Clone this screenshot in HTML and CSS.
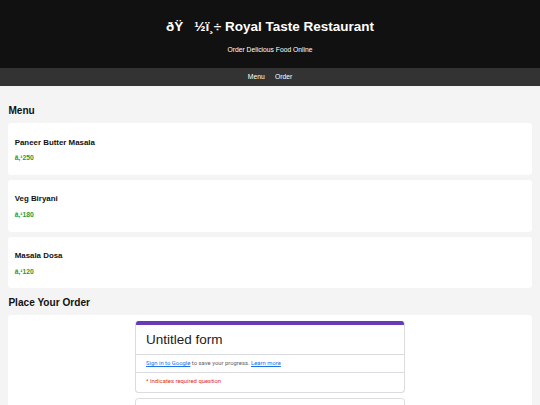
FILE: index.html
```html
<!DOCTYPE html>
<html lang="en">
<head>
<meta charset="utf-8">
<title>Royal Taste Restaurant</title>
<link rel="stylesheet" href="styles.css">
</head>
<body>
<header class="site-header">
  <h1 class="site-title">ðŸ&#x8D;½ï¸÷ Royal Taste Restaurant</h1>
  <p class="site-tagline">Order Delicious Food Online</p>
</header>
<nav class="site-nav">
  <a class="nav-link" href="#menu">Menu</a>
  <a class="nav-link" href="#order">Order</a>
</nav>
<main class="container">
  <h2 class="section-title" id="menu">Menu</h2>
  <div class="item">
    <h3 class="item-name">Paneer Butter Masala</h3>
    <p class="item-price">â‚¹250</p>
  </div>
  <div class="item">
    <h3 class="item-name">Veg Biryani</h3>
    <p class="item-price">â‚¹180</p>
  </div>
  <div class="item">
    <h3 class="item-name">Masala Dosa</h3>
    <p class="item-price">â‚¹120</p>
  </div>
  <h2 class="section-title" id="order">Place Your Order</h2>
  <div class="order-box">
    <div class="gform">
      <div class="gform-card gform-head">
        <div class="gform-bar"></div>
        <div class="gform-title">Untitled form</div>
        <div class="gform-row gform-signin"><a class="gform-link" href="#">Sign in to Google</a> to save your progress. <a class="gform-link" href="#">Learn more</a></div>
        <div class="gform-row gform-required">* Indicates required question</div>
      </div>
      <div class="gform-card gform-question"></div>
    </div>
  </div>
</main>
</body>
</html>
```
FILE: styles.css
```css
html, body {
  margin: 0;
  padding: 0;
}
body {
  background: #f4f4f4;
  font-family: "Liberation Sans", Arial, sans-serif;
  color: #111;
}
.site-header {
  background: #111;
  color: #fff;
  text-align: center;
  padding: 17px 0 14.6px;
}
.site-title {
  margin: 0 0 10.1px;
  font-size: 13.5px;
  line-height: 19px;
  font-weight: bold;
}
.site-tagline {
  margin: 0;
  font-size: 6.75px;
  line-height: 7.8px;
}
.site-nav {
  background: #333;
  text-align: center;
  padding: 5px 0 4.4px;
  font-size: 6.75px;
  line-height: 7.8px;
}
.nav-link {
  color: #fff;
  text-decoration: none;
  margin: 0 4.2px;
}
.container {
  padding: 10.5px 8.4px 20px;
}
.section-title {
  margin: 8.5px 0 7.2px;
  font-size: 10.1px;
  line-height: 11.6px;
  font-weight: bold;
  color: #111;
}
.item {
  background: #fff;
  border-radius: 3.4px;
  padding: 14.3px 6.3px 12.9px;
  margin-bottom: 5px;
}
.item-name {
  margin: 0 0 7.5px;
  font-size: 7.9px;
  line-height: 9.1px;
  font-weight: bold;
  color: #111;
}
.item-price {
  margin: 0;
  font-size: 6.75px;
  line-height: 7.8px;
  font-weight: bold;
  color: #1f9a33;
}
.order-box {
  background: #fff;
  border-radius: 3.4px;
  padding: 5.6px 0 0;
  height: 90px;
  overflow: hidden;
}
.gform {
  width: 270px;
  margin: 0 auto;
  font-family: Roboto, "Liberation Sans", Arial, sans-serif;
}
.gform-card {
  background: #fff;
  border: 1px solid #dadce0;
  border-radius: 3.4px;
  overflow: hidden;
}
.gform-head {
  border-top: 0;
}
.gform-bar {
  height: 4.2px;
  background: #673ab7;
}
.gform-title {
  padding: 5.8px 10px 5.7px;
  font-family: "Liberation Sans", Arial, sans-serif;
  font-size: 13.5px;
  line-height: 17px;
  color: #202124;
  border-bottom: 1px solid #dadce0;
}
.gform-row {
  padding: 5px 10px 5.5px;
  font-size: 5.9px;
  line-height: 6.8px;
}
.gform-signin {
  color: #5f6368;
  border-bottom: 1px solid #dadce0;
}
.gform-link {
  color: #1a73e8;
  text-decoration: underline;
}
.gform-required {
  color: #d93025;
  padding: 5.3px 10px 6.9px;
}
.gform-question {
  margin-top: 5px;
  height: 60px;
}
```
